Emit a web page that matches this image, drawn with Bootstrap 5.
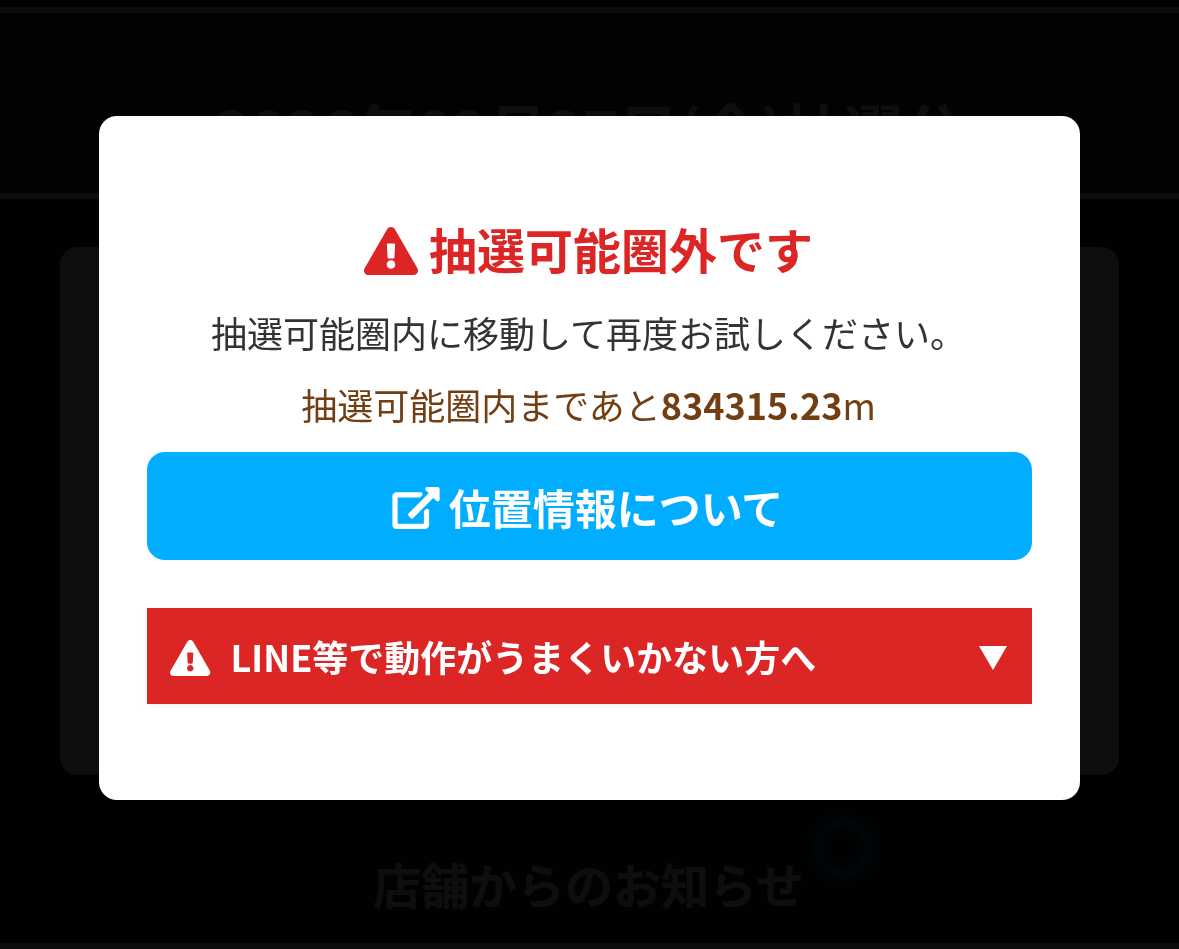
<!DOCTYPE html>
<html lang="ja">
<head>
    <meta charset="UTF-8">
    <meta name="viewport" content="width=device-width, initial-scale=1.0">
    <title>抽選</title>
    <link rel="stylesheet" href="https://cdn.jsdelivr.net/npm/bootstrap@5.3.0/dist/css/bootstrap.min.css">
    <style>
        body {
            background: #0a1830;
            font-family: 'Noto Sans CJK JP', sans-serif;
            height: 949px;
            overflow: hidden;
        }
        .draw-page {
            color: #fff;
            padding-top: 7px;
        }
        .draw-date {
            height: 192px;
            border-top: 6px solid #e4e4e4;
            border-bottom: 6px solid #e4e4e4;
            background: #142848;
            padding-top: 71px;
            font-size: 60px;
            line-height: 90px;
            font-weight: 700;
        }
        .draw-panel {
            height: 528px;
            margin: 48px 60px 0;
            border-radius: 18px;
            background: #fff;
        }
        .shop-news {
            height: 168px;
            padding: 72px 2px 0 0;
            font-size: 48px;
            line-height: 72px;
            font-weight: 700;
        }
        .page-rule {
            height: 6px;
            background: #e4e4e4;
        }
        .glow-ring {
            position: absolute;
            left: 812px;
            top: 817px;
            width: 62px;
            height: 62px;
            border: 11px solid #0a7080;
            border-radius: 50%;
            filter: blur(3px);
        }
        .modal {
            background: rgba(0, 0, 0, 0.945);
        }
        .area-dialog {
            max-width: none;
            width: 981px;
            margin: 116px auto 0;
        }
        .area-box {
            height: 684px;
            border: 0;
            border-radius: 18px;
            padding: 96px 48px;
        }
        .area-title {
            color: #dc2626;
            font-size: 48px;
            line-height: 72px;
            padding-right: 2px;
            gap: 11px;
        }
        .area-title svg {
            margin-top: 6px;
        }
        .area-text {
            color: #333;
            font-size: 36px;
            line-height: 54px;
            padding-right: 2px;
            margin: 21px 0 0;
        }
        .area-distance {
            color: #713f12;
            font-size: 36px;
            line-height: 54px;
            padding-right: 2px;
            margin: 18px 0 21px;
        }
        .location-btn, .location-btn:hover {
            height: 108px;
            border: 0;
            border-radius: 18px;
            background: #00adff;
            color: #fff;
            font-size: 42px;
            font-weight: 700;
            padding: 0 16px 0 12px;
            gap: 9px;
        }
        .location-btn svg {
            margin-top: 4px;
        }
        .line-help {
            height: 96px;
            margin-top: 48px;
            padding: 0 25px 0 23px;
            background: #dc2626;
            box-shadow: 0 3px 6px rgba(0, 0, 0, 0.04);
            color: #fff;
            font-size: 36px;
            font-weight: 700;
        }
        .line-help svg {
            margin-top: 3px;
        }
        .line-help span {
            margin-left: 20px;
        }
        svg {
            fill: currentColor;
            flex: none;
        }
    </style>
</head>
<body>
    <svg class="d-none">
        <symbol id="warning" viewBox="0 0 576 512">
            <path d="M569.517 440.013C587.975 472.007 564.806 512 527.94 512H48.054c-36.937 0-59.999-40.055-41.577-71.987L246.423 23.985c18.467-32.009 64.72-31.951 83.154 0l239.94 416.028zM288 354c-25.405 0-46 20.595-46 46s20.595 46 46 46 46-20.595 46-46-20.595-46-46-46zm-43.673-165.346l7.418 136c.347 6.364 5.609 11.346 11.982 11.346h48.546c6.373 0 11.635-4.982 11.982-11.346l7.418-136c.375-6.874-5.098-12.654-11.982-12.654h-63.383c-6.884 0-12.356 5.78-11.981 12.654z"/>
        </symbol>
        <symbol id="external" viewBox="0 0 576 512">
            <path d="M576 24v127.984c0 21.461-25.96 31.98-40.971 16.971l-35.707-35.709-243.523 243.523c-9.373 9.373-24.568 9.373-33.941 0l-22.627-22.627c-9.373-9.373-9.373-24.569 0-33.941L442.756 76.676l-35.703-35.705C391.982 25.9 402.656 0 424.024 0H552c13.255 0 24 10.745 24 24zM407.029 270.794l-16 16A23.999 23.999 0 0 0 384 303.765V448H64V128h264a24.003 24.003 0 0 0 16.97-7.029l16-16C376.089 89.851 365.381 64 344 64H48C21.49 64 0 85.49 0 112v352c0 26.51 21.49 48 48 48h352c26.51 0 48-21.49 48-48V287.764c0-21.382-25.852-32.09-40.971-16.97z"/>
        </symbol>
    </svg>

    <main class="draw-page">
        <div class="glow-ring"></div>
        <div class="draw-date text-center">2026年02月27日(金)抽選分</div>
        <div class="draw-panel"></div>
        <div class="shop-news text-center">店舗からのお知らせ</div>
        <div class="page-rule"></div>
    </main>

    <div class="modal show d-block overflow-hidden" tabindex="-1">
        <div class="modal-dialog area-dialog">
            <div class="modal-content area-box">
                <h2 class="area-title d-flex justify-content-center align-items-center fw-bold mb-0">
                    <svg width="54" height="48"><use href="#warning"/></svg>
                    抽選可能圏外です
                </h2>
                <p class="area-text text-center">抽選可能圏内に移動して再度お試しください。</p>
                <p class="area-distance text-center">抽選可能圏内まであと<b>834315.23</b>m</p>
                <a href="#" class="btn location-btn d-flex justify-content-center align-items-center">
                    <svg width="48" height="42"><use href="#external"/></svg>
                    位置情報について
                </a>
                <div class="line-help d-flex align-items-center">
                    <svg width="40.5" height="36"><use href="#warning"/></svg>
                    <span>LINE等で動作がうまくいかない方へ</span>
                    <svg class="ms-auto" width="28" height="24" viewBox="0 0 28 24"><path d="M0 0h28L14 24z"/></svg>
                </div>
            </div>
        </div>
    </div>
    <script src="https://cdn.jsdelivr.net/npm/bootstrap@5.3.0/dist/js/bootstrap.bundle.min.js"></script>
</body>
</html>
